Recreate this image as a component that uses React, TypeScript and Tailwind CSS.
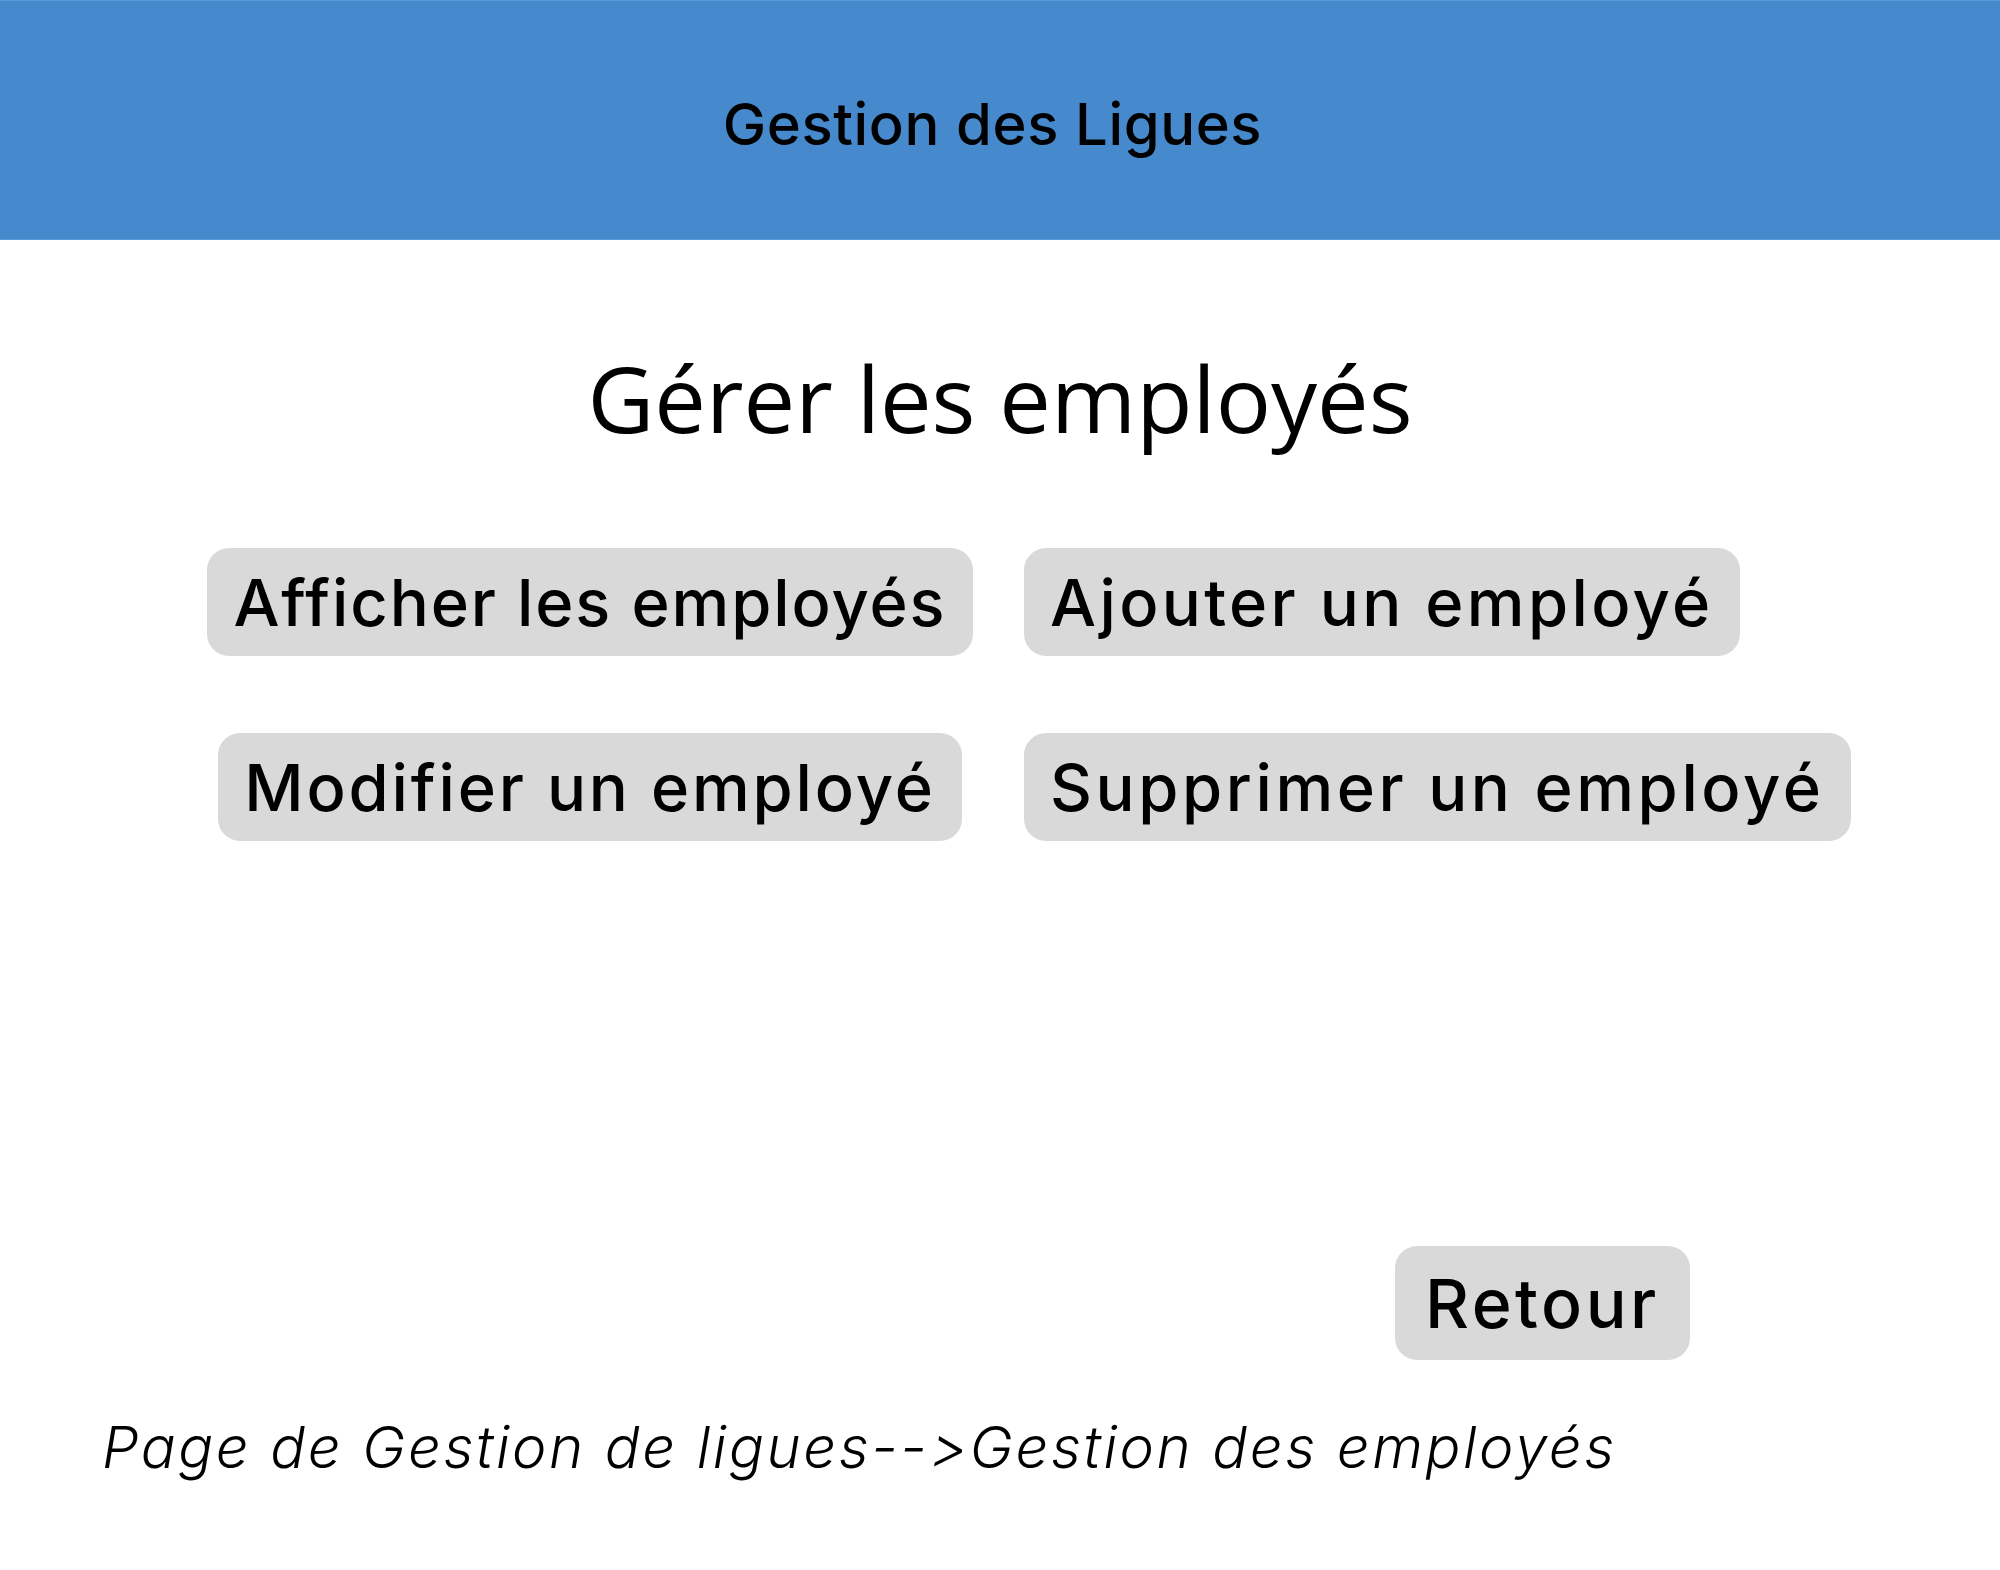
import React from 'react';

const btn =
  "rounded-[22px] bg-[#d9d9d9] px-[26px] text-black font-medium leading-none [font-feature-settings:'calt'_0]";

const App: React.FC = () => {
  return (
    <div className="min-h-[1570px] w-[2000px] bg-white font-['Inter',sans-serif] text-black">
      <header className="flex h-[240px] items-center justify-center border-y border-[#5b9bd8] bg-[#4689cc] pr-[15px] pt-[8px]">
        <h1 className="text-[58px] font-medium leading-none tracking-[0.6px]">Gestion des Ligues</h1>
      </header>

      <h2 className="mt-[112px] text-center font-['Open_Sans',sans-serif] text-[92px] font-normal leading-none">
        Gérer les employés
      </h2>

      <div className="mt-[104px] grid grid-cols-[820px_auto] gap-x-[24px] gap-y-[77px] pl-[180px]">
        <button className={`${btn} h-[108px] justify-self-center text-[65px] tracking-[1.9px]`}>
          Afficher les employés
        </button>
        <button className={`${btn} h-[108px] justify-self-start text-[65px] tracking-[3.35px]`}>
          Ajouter un employé
        </button>
        <button className={`${btn} h-[108px] justify-self-center text-[65px] tracking-[2.85px]`}>
          Modifier un employé
        </button>
        <button className={`${btn} h-[108px] justify-self-start text-[65px] tracking-[3.6px]`}>
          Supprimer un employé
        </button>
      </div>

      <div className="mt-[405px] flex pl-[1395px]">
        <button className={`${btn} h-[114px] px-[30px] text-[68px] tracking-[3.5px]`}>Retour</button>
      </div>

      <p className="mt-[58px] pl-[102px] text-[58px] font-light italic leading-none tracking-[2.6px] [font-feature-settings:'calt'_0]">
        Page de Gestion de ligues--&gt;Gestion des employés
      </p>
    </div>
  );
};

export default App;
